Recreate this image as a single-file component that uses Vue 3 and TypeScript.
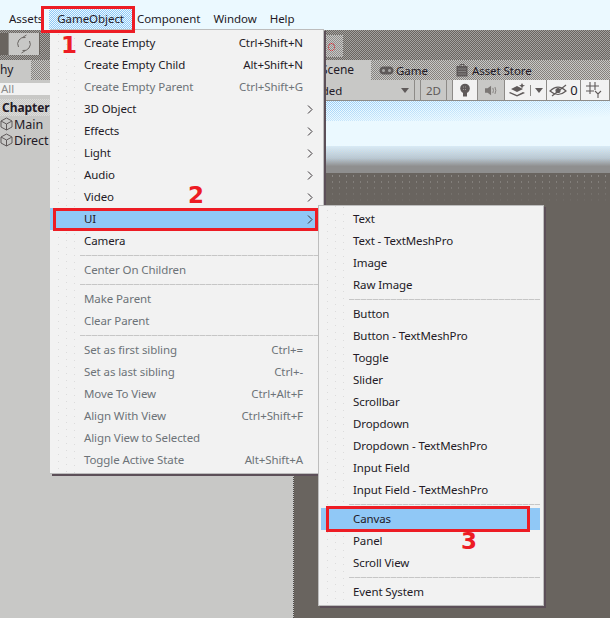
<template>
  <div class="screen">
    <nav class="menubar">
      <span v-for="m in menubar" :key="m" class="menubar-item" :class="{ open: m === 'GameObject' }">{{ m }}</span>
    </nav>

    <div class="toolbar">
      <div class="toolbar-dark"></div>
      <button class="tool-btn">
        <svg width="20" height="20" viewBox="0 0 20 20" fill="none" stroke="#6a6663" stroke-width="1">
          <path d="M4.500 13A6.500 6.500 0 0 1 11.500 3.500M8.500 3.500 12.500 1M15.500 7A6.500 6.500 0 0 1 8.500 16.500M11.500 16.500 7.500 19" />
        </svg>
      </button>
      <div class="play-btn"><span class="play-dot"></span></div>
    </div>

    <div class="panels">
      <section class="hierarchy">
        <div class="tabbar">
          <div class="tab hier-tab">hy</div>
        </div>
        <div class="search-row"><div class="search">All</div></div>
        <div class="tree">
          <div class="tree-title">Chapter</div>
          <div v-for="n in treeItems" :key="n" class="tree-item">
            <svg width="13" height="14" viewBox="0 0 13 14" fill="none" stroke="#5f5a5a" stroke-width="1">
              <path d="M6.500 1 12 4v6l-5.500 3L1 10V4zM1 4l5.500 3L12 4M6.500 7v6" />
            </svg>
            <span>{{ n }}</span>
          </div>
        </div>
      </section>

      <section class="scene">
        <div class="tabbar scene-tabs">
          <div class="tab scene-tab">Scene</div>
          <div class="tab-plain game-tab">
            <svg width="15" height="9" viewBox="0 0 15 9"><rect x="0.500" y="0.500" width="14" height="8" rx="4" fill="#5f5a5a" /><circle cx="4.500" cy="4.500" r="1.500" fill="#a8a8a6" /><circle cx="10.500" cy="4.500" r="1.500" fill="#a8a8a6" /></svg>
            Game
          </div>
          <div class="tab-plain store-tab">
            <svg width="12" height="14" viewBox="0 0 12 14"><path d="M4 3V1.500h4V3" fill="none" stroke="#5f5a5a" /><rect x="0.500" y="3" width="11" height="10.500" fill="#5f5a5a" /><path d="M2.500 6h7M2.500 8.500h7M2.500 11h7" stroke="#a8a8a6" stroke-dasharray="1 1" /></svg>
            Asset Store
          </div>
        </div>
        <div class="scene-toolbar">
          <div class="sbtn shading">Shaded<span class="caret"></span></div>
          <div class="sbtn two-d">2D</div>
          <div class="sbtn on bulb">
            <svg width="12" height="15" viewBox="0 0 12 15"><circle cx="6" cy="5.500" r="4.800" fill="#5f5a5a" /><rect x="4" y="10" width="4" height="3.500" fill="#5f5a5a" /><path d="M4 4h4M4 6.500h4" stroke="#a09c9a" stroke-dasharray="1 1" /></svg>
          </div>
          <div class="sbtn audio">
            <svg width="13" height="11" viewBox="0 0 15 12" fill="#7b7775"><path d="M0 3.500h3L7 .5v11l-4-3H0z" /><path d="M9 3q1.500 3 0 6M11.500 2q2 4 0 8" fill="none" stroke="#7b7775" /></svg>
          </div>
          <div class="sbtn on layers">
            <svg width="17" height="14" viewBox="0 0 17 14" fill="#5f5a5a"><path d="M1 9l7 3 6-3 2 1-8 3.500L0 10zM2 6l6 3 6-3-6-3z" /><path d="M13 0l1 2 2 .5-2 1-1 2-1-2-2-1 2-.5z" /></svg>
            <i class="divider"></i><span class="caret"></span>
          </div>
          <div class="sbtn on eye">
            <svg width="19" height="13" viewBox="0 0 19 13" fill="none" stroke="#5f5a5a" stroke-width="1.200"><path d="M1 7q8-8 16 0-8 7-16 0z" /><circle cx="9" cy="6.500" r="2" fill="#5f5a5a" /><path d="M3 12 17 1" /></svg>
            <span>0</span>
          </div>
          <div class="sbtn on grid">
            <svg width="18" height="16" viewBox="0 0 18 16" fill="none" stroke="#5f5a5a" stroke-width="1.100"><path d="M4 0v12M9 0v8M0 4h13M0 9h8M9 9l3 3 3-3M12 12v4" /></svg>
          </div>
        </div>
        <div class="viewport">
          <div class="sky-top"></div>
          <div class="sky-clear"></div>
          <div class="horizon"></div>
          <div class="ground"><div class="ground-haze"></div></div>
        </div>
      </section>
    </div>

    <!-- open menus sit over the editor -->
    <div class="menu main-menu">
      <template v-for="(row, i) in mainRows" :key="i">
        <div v-if="row.sep" class="sep"></div>
        <div v-else class="row" :class="{ off: row.off, active: row.active }">
          <span class="label">{{ row.label }}</span>
          <span v-if="row.keys" class="keys">{{ row.keys }}</span>
          <svg v-if="row.arrow" class="arrow" width="6" height="9" viewBox="0 0 6 9" fill="none" stroke="#3b3438" stroke-width="1"><path d="M1 .5l4 4-4 4" /></svg>
        </div>
      </template>
    </div>

    <div class="menu sub-menu">
      <template v-for="(row, i) in subRows" :key="i">
        <div v-if="row.sep" class="sep"></div>
        <div v-else class="row" :class="{ active: row.active }">
          <span class="label">{{ row.label }}</span>
        </div>
      </template>
    </div>

    <!-- tutorial markers -->
    <div class="mark mark-object"></div>
    <div class="mark mark-ui"></div>
    <div class="mark mark-canvas"></div>
    <span class="num num-1">1</span>
    <span class="num num-2">2</span>
    <span class="num num-3">3</span>
  </div>
</template>

<script setup lang="ts">
interface Row {
  label?: string;
  keys?: string;
  arrow?: boolean;
  off?: boolean;
  active?: boolean;
  sep?: boolean;
}

const menubar = ['Assets', 'GameObject', 'Component', 'Window', 'Help'];
const treeItems = ['Main', 'Direct'];

const mainRows: Row[] = [
  { label: 'Create Empty', keys: 'Ctrl+Shift+N' },
  { label: 'Create Empty Child', keys: 'Alt+Shift+N' },
  { label: 'Create Empty Parent', keys: 'Ctrl+Shift+G', off: true },
  { label: '3D Object', arrow: true },
  { label: 'Effects', arrow: true },
  { label: 'Light', arrow: true },
  { label: 'Audio', arrow: true },
  { label: 'Video', arrow: true },
  { label: 'UI', arrow: true, active: true },
  { label: 'Camera' },
  { sep: true },
  { label: 'Center On Children', off: true },
  { sep: true },
  { label: 'Make Parent', off: true },
  { label: 'Clear Parent', off: true },
  { sep: true },
  { label: 'Set as first sibling', keys: 'Ctrl+=', off: true },
  { label: 'Set as last sibling', keys: 'Ctrl+-', off: true },
  { label: 'Move To View', keys: 'Ctrl+Alt+F', off: true },
  { label: 'Align With View', keys: 'Ctrl+Shift+F', off: true },
  { label: 'Align View to Selected', off: true },
  { label: 'Toggle Active State', keys: 'Alt+Shift+A', off: true },
];

const subRows: Row[] = [
  { label: 'Text' },
  { label: 'Text - TextMeshPro' },
  { label: 'Image' },
  { label: 'Raw Image' },
  { sep: true },
  { label: 'Button' },
  { label: 'Button - TextMeshPro' },
  { label: 'Toggle' },
  { label: 'Slider' },
  { label: 'Scrollbar' },
  { label: 'Dropdown' },
  { label: 'Dropdown - TextMeshPro' },
  { label: 'Input Field' },
  { label: 'Input Field - TextMeshPro' },
  { sep: true },
  { label: 'Canvas', active: true },
  { label: 'Panel' },
  { label: 'Scroll View' },
  { sep: true },
  { label: 'Event System' },
];
</script>

<style>
html,
body {
  margin: 0;
  background: #c8c8c6;
}
</style>

<style scoped>
.screen {
  position: relative;
  width: 610px;
  height: 618px;
  overflow: hidden;
  display: flex;
  flex-direction: column;
  font-family: "Noto Sans", sans-serif;
  font-size: 11.500px;
  letter-spacing: -0.050px;
  color: #231a26;
  background: #c8c8c6;
}

.menubar {
  height: 30px;
  flex: none;
  display: flex;
  align-items: center;
  padding: 8px 0 0 9px;
  box-sizing: border-box;
  background: #ebf9ff;
}

.menubar-item {
  margin-right: 13px;
  line-height: 20px;
}

.menubar-item.open {
  padding: 0 8px;
  margin: 0 5px 0 -7px;
  background: repeating-conic-gradient(#90c8f6 0 25%, #ebf9ff 0 50%) 0 0 / 2px 2px;
}

.toolbar {
  height: 30px;
  flex: none;
  display: flex;
  align-items: flex-start;
  padding-top: 3px;
  box-sizing: border-box;
  background: repeating-conic-gradient(#6a6561 0 25%, #a3a29f 0 50%) 0 0 / 2px 2px;
}

.toolbar-dark {
  width: 8px;
  height: 22px;
  background: #69645f;
}

.tool-btn {
  width: 32px;
  height: 22px;
  padding: 0;
  border: 0;
  border-right: 1px solid #69645f;
  border-left: 1px solid #8d8b88;
  background: #c8c8c6;
  display: flex;
  align-items: center;
  justify-content: center;
}

.play-btn {
  position: relative;
  width: 20px;
  height: 22px;
  margin: 2px 0 0 283px;
  background: repeating-conic-gradient(#c8c8c6 0 25%, #8f8d8b 0 50%) 0 0 / 2px 2px;
}

.play-dot {
  position: absolute;
  left: 5px;
  top: 8px;
  width: 5px;
  height: 6px;
  border: 1px dotted #e0202c;
  border-radius: 50%;
}

.panels {
  flex: 1;
  min-height: 0;
  display: flex;
}

.hierarchy {
  width: 293px;
  flex: none;
  background: #c8c8c6;
}

.tabbar {
  height: 20px;
  display: flex;
  background: repeating-conic-gradient(#c8c8c6 0 25%, #85817e 0 50%) 0 0 / 2px 2px;
}

.tab {
  background: #c8c8c6;
  line-height: 19px;
  font-size: 12px;
}

.hier-tab {
  width: 31px;
}

.search-row {
  height: 19px;
  padding-top: 3px;
  box-sizing: border-box;
}

.search {
  height: 12px;
  line-height: 12px;
  color: #8b8b8b;
  padding-left: 1px;
  background: #f2f2f2;
}

.tree-title {
  padding-left: 2px;
  font-size: 12px;
  font-weight: 700;
  line-height: 17px;
  background: repeating-conic-gradient(#c8c8c6 0 25%, #dcdcda 0 50%) 0 0 / 2px 2px;
}

.tree-item {
  height: 16px;
  display: flex;
  align-items: center;
  gap: 1px;
  font-size: 12.500px;
}

.scene {
  flex: 1;
  min-width: 0;
  display: flex;
  flex-direction: column;
  border-left: 1px dotted #4c4a4a;
}

.scene-tab {
  width: 77px;
  padding-left: 27px;
  box-sizing: border-box;
}

.tab-plain {
  display: flex;
  align-items: center;
  gap: 2px;
  line-height: 19px;
}

.game-tab {
  margin-left: 8px;
}

.store-tab {
  margin-left: 28px;
  gap: 4px;
}

.scene-toolbar {
  height: 20px;
  flex: none;
  display: flex;
  background: #c8c8c6;
  border-bottom: 1px solid #8d8b88;
}

.sbtn {
  display: flex;
  align-items: center;
  justify-content: center;
  border-right: 1px solid #8d8b88;
  box-sizing: border-box;
}

.sbtn.on {
  background: #f2f2f2;
}

.shading {
  width: 121px;
  padding: 0 5px 0 8px;
  justify-content: space-between;
  margin-right: 5px;
}

.caret {
  width: 0;
  height: 0;
  border: 4px solid transparent;
  border-top: 5px solid #5f5a5a;
  border-bottom: 0;
}

.two-d {
  width: 27px;
  margin-right: 5px;
  color: #5f5a5a;
  border-left: 1px solid #8d8b88;
}

.bulb {
  width: 26px;
  border-left: 1px solid #8d8b88;
}

.audio {
  width: 27px;
}

.layers {
  width: 42px;
  gap: 4px;
}

.divider {
  width: 1px;
  height: 11px;
  background: #8d8b88;
}

.eye {
  width: 34px;
  gap: 2px;
  font-size: 13px;
}

.grid {
  flex: 1;
  justify-content: flex-start;
  padding-left: 5px;
}

.viewport {
  flex: 1;
  display: flex;
  flex-direction: column;
  background: #69645f;
}

.sky-top {
  height: 20px;
  flex: none;
  background:
    linear-gradient(176deg, rgba(235, 249, 255, 0), #ebf9ff 90%),
    repeating-conic-gradient(#90c8f6 0 25%, #ebf9ff 0 50%) 0 0 / 2px 2px;
}

.sky-clear {
  height: 25px;
  flex: none;
  background: #ebf9ff;
}

.horizon {
  height: 27px;
  flex: none;
  background:
    linear-gradient(rgba(235, 249, 255, 0.7), rgba(200, 200, 198, 0.5) 45%, #8f8f8f 75%, #8f8f8f),
    repeating-conic-gradient(#90c8f6 0 25%, #c8c8c6 0 50%) 0 0 / 2px 2px;
}

.ground {
  flex: 1;
}

.ground-haze {
  height: 32px;
  opacity: 0.6;
  background: radial-gradient(circle, #a5a3a1 0.7px, transparent 1px) 0 0 / 7px 6px;
  -webkit-mask-image: linear-gradient(#000, transparent);
  mask-image: linear-gradient(#000, transparent);
}

.menu {
  position: absolute;
  box-sizing: border-box;
  letter-spacing: -0.100px;
  background-color: #f2f2f2;
  background-image:
    radial-gradient(circle, #dcdcdc 0.6px, transparent 1px),
    radial-gradient(circle, #dcdcdc 0.6px, transparent 1px),
    radial-gradient(circle, #dcdcdc 0.6px, transparent 1px);
  background-size: 7px 7px;
  background-repeat: repeat-y;
  background-position: 5px 8px, 13px 11px, 21px 5px;
  box-shadow: 2px 2px 0 #5c4f58;
  border: 1px solid #bdbdbd;
}

.main-menu {
  left: 50px;
  top: 29px;
  width: 274px;
  height: 445px;
  padding-top: 2px;
  border-left: 0;
}

.sub-menu {
  left: 318px;
  top: 205px;
  width: 226px;
  height: 401px;
  padding-top: 2px;
}

.row {
  height: 22px;
  display: flex;
  align-items: center;
  position: relative;
  line-height: 22px;
}

.main-menu .row {
  padding: 0 20px 0 34px;
  justify-content: space-between;
}

.sub-menu .row {
  padding-left: 32px;
  margin: 0 3px 0 2px;
}

.row.active {
  background: #90c8f6;
}

.row.off {
  color: #6d7378;
}

.arrow {
  position: absolute;
  right: 10px;
  top: 7px;
}

.sep {
  height: 7px;
  margin: 0 0 0 30px;
  background: repeating-linear-gradient(90deg, #c6c6c6 0 5px, #dcdcdc 5px 6px) 0 3px / 100% 1px no-repeat;
}

.sub-menu .sep {
  margin: 0 3px 0 30px;
}

.mark {
  position: absolute;
  border: 3px solid #ed1c24;
  box-sizing: border-box;
  pointer-events: none;
}

.mark-object {
  left: 41px;
  top: 6px;
  width: 94px;
  height: 27px;
}

.mark-ui {
  left: 53px;
  top: 208px;
  width: 265px;
  height: 23px;
}

.mark-canvas {
  left: 326px;
  top: 506px;
  width: 204px;
  height: 26px;
}

.num {
  position: absolute;
  font-family: "DejaVu Sans", sans-serif;
  font-weight: 700;
  font-size: 23px;
  line-height: 20px;
  color: #ed1c24;
}

.num-1 {
  left: 61px;
  top: 35px;
}

.num-2 {
  left: 188px;
  top: 185px;
}

.num-3 {
  left: 461px;
  top: 531px;
}
</style>
